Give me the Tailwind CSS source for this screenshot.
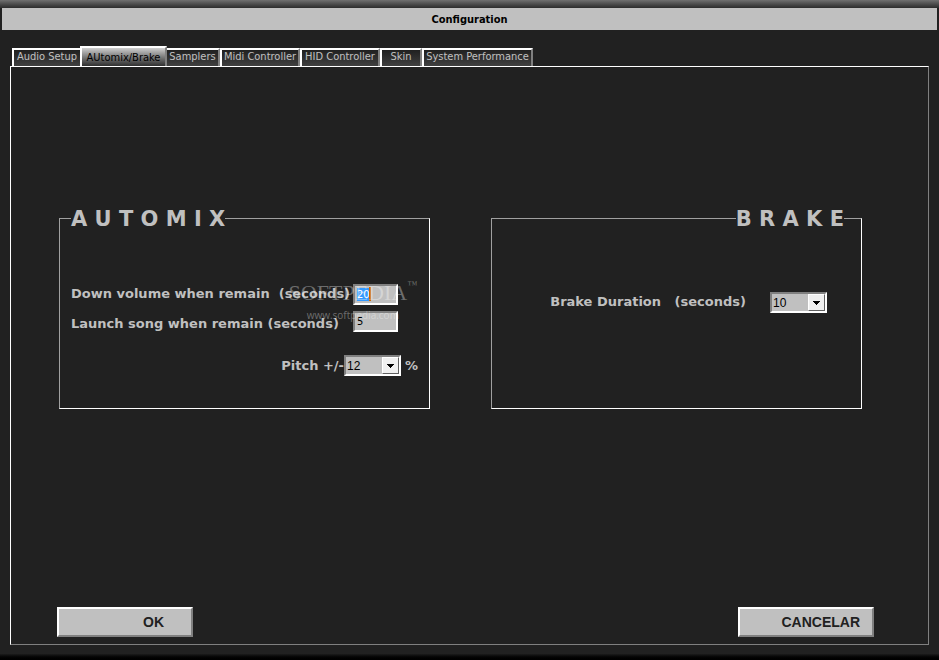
<!DOCTYPE html>
<html lang="en">
<head>
    <meta charset="UTF-8">
    <meta name="viewport" content="width=device-width, initial-scale=1.0">
    <title>Configuration</title>
    <script src="https://cdn.jsdelivr.net/npm/@tailwindcss/browser@4"></script>
</head>
<body class="min-h-screen flex flex-col bg-[#212121] font-['DejaVu_Sans_Condensed','DejaVu_Sans',sans-serif]">
    <!-- Title bar -->
    <div class="h-2 bg-linear-to-b from-[#707070] to-[#2c2c2c]"></div>
    <header class="mx-[2px] h-[22px] pt-[2px] bg-[#c0c0c0] flex items-center justify-center">
        <h1 class="text-[11px] leading-4 font-bold text-black">Configuration</h1>
    </header>

    <!-- Tabs -->
    <nav class="mt-4 px-3 h-5 flex items-end text-[11px] leading-[14px] whitespace-nowrap text-[#c0c0c0]">
        <button class="w-[68px] h-[18px] pb-[2px] border-2 border-r-0 border-b-0 border-white bg-linear-to-b from-[#202020] to-[#404040]">Audio Setup</button>
        <button class="w-[87px] h-5 pt-[2px] border-2 border-b-0 border-white border-r-[#808080] bg-linear-to-b from-[#d0d0d0] to-[#303030] text-black">AUtomix/Brake</button>
        <button class="w-[53px] h-[18px] pb-[2px] border-2 border-b-0 border-l-0 border-white border-r-[#808080] bg-linear-to-b from-[#202020] to-[#404040]">Samplers</button>
        <button class="w-[80px] h-[18px] pb-[2px] border-2 border-b-0 border-white border-r-[#808080] bg-linear-to-b from-[#202020] to-[#404040]">Midi Controller</button>
        <button class="w-[80px] h-[18px] pb-[2px] border-2 border-b-0 border-white border-r-[#808080] bg-linear-to-b from-[#202020] to-[#404040]">HID Controller</button>
        <button class="w-[42px] h-[18px] pb-[2px] border-2 border-b-0 border-white border-r-[#808080] bg-linear-to-b from-[#202020] to-[#404040]">Skin</button>
        <button class="w-[111px] h-[18px] pb-[2px] border-2 border-b-0 border-white border-r-[#808080] bg-linear-to-b from-[#202020] to-[#404040]">System Performance</button>
    </nav>

    <!-- Tab page -->
    <main class="flex-1 mx-[10px] flex flex-col justify-between border border-t-white border-l-white border-r-[#808080] border-b-[#808080] pb-[7px]">
        <div class="pt-[138px] pl-12 pr-[66px] grid grid-cols-2 gap-[61px] text-[13px] leading-5 font-bold font-['DejaVu_Sans',sans-serif] text-[#c0c0c0] whitespace-nowrap">
            <fieldset class="relative h-[204px] border border-t-[#a0a0a0] border-l-[#a0a0a0] border-r-white border-b-white">
                <legend class="ml-[11px] pt-[2px] text-[21px] leading-6 whitespace-pre">A U T O M I X</legend>
                <div class="pt-[53px] pl-[11px] grid grid-cols-[282px_45px] gap-y-[6px]">
                    <label for="downVolume" class="h-[21px] whitespace-pre">Down volume when remain  (seconds)</label>
                    <div class="relative">
                        <input id="downVolume" type="text" value="20" autofocus class="block w-full h-[21px] px-[2px] text-[11px] leading-[14px] font-normal font-['DejaVu_Sans_Condensed',sans-serif] text-black bg-[#c0c0c0] border-2 border-t-[#808080] border-l-[#808080] border-r-white border-b-white outline-none selection:bg-[#3399ff] selection:text-white">
                        <span class="absolute top-[3px] left-4 w-[2px] h-[14px] bg-[#cc6600]"></span>
                    </div>
                    <label for="launchSong" class="h-[21px] pt-[3px]">Launch song when remain (seconds)</label>
                    <input id="launchSong" type="text" value="5" class="h-[21px] px-[2px] text-[11px] leading-[14px] font-normal font-['DejaVu_Sans_Condensed',sans-serif] text-black bg-[#c0c0c0] border-2 border-t-[#808080] border-l-[#808080] border-r-white border-b-white outline-none">
                </div>
                <div class="mt-[23px] pr-[11px] flex justify-end items-center">
                    <label for="pitch">Pitch +/-</label>
                    <div class="relative w-[57px] mr-1">
                        <select id="pitch" class="block appearance-none w-full h-[21px] px-[1px] text-[12px] leading-4 font-normal font-['Liberation_Sans',sans-serif] text-black bg-[#c0c0c0] border-2 border-t-[#808080] border-l-[#808080] border-r-white border-b-white">
                            <option>12</option>
                        </select>
                        <span class="absolute top-[2px] right-[2px] w-[17px] h-[17px] flex items-center justify-center pointer-events-none bg-[#f0f0f0] border border-t-white border-l-white border-r-[#606060] border-b-[#606060]">
                            <svg width="7" height="4" viewBox="0 0 7 4" shape-rendering="crispEdges"><path d="M0 0h7v1h-1v1h-1v1h-1v1h-1v-1h-1v-1h-1v-1h-1z"/></svg>
                        </span>
                    </div>
                    <span>%</span>
                </div>
                <!-- Watermark -->
                <div class="absolute top-12 right-3 flex flex-col items-center pointer-events-none font-normal text-white/35">
                    <span class="flex items-start font-['Liberation_Serif',serif] text-[22px] leading-7">SOFTPEDIA<span class="text-[10px] leading-3">™</span></span>
                    <span class="font-['Open_Sans',sans-serif] text-[10px] leading-4">www.softpedia.com</span>
                </div>
            </fieldset>

            <fieldset class="h-[204px] border border-t-[#a0a0a0] border-l-[#a0a0a0] border-r-white border-b-white">
                <legend class="ml-auto mr-[17px] pt-[2px] text-[21px] leading-6 whitespace-pre">B R A K E</legend>
                <div class="pt-[61px] pr-[34px] flex justify-end">
                    <label for="brakeDuration" class="mr-6 whitespace-pre">Brake Duration   (seconds)</label>
                    <div class="relative w-[57px]">
                        <select id="brakeDuration" class="block appearance-none w-full h-[21px] px-[1px] text-[12px] leading-4 font-normal font-['Liberation_Sans',sans-serif] text-black bg-[#c0c0c0] border-2 border-t-[#808080] border-l-[#808080] border-r-white border-b-white">
                            <option>10</option>
                        </select>
                        <span class="absolute top-[2px] right-[2px] w-[17px] h-[17px] flex items-center justify-center pointer-events-none bg-[#f0f0f0] border border-t-white border-l-white border-r-[#606060] border-b-[#606060]">
                            <svg width="7" height="4" viewBox="0 0 7 4" shape-rendering="crispEdges"><path d="M0 0h7v1h-1v1h-1v1h-1v1h-1v-1h-1v-1h-1v-1h-1z"/></svg>
                        </span>
                    </div>
                </div>
            </fieldset>
        </div>

        <div class="pl-[46px] pr-[54px] flex justify-between text-[14px] leading-5 font-bold font-['Liberation_Sans',sans-serif] text-[#212121]">
            <button class="w-[136px] h-[30px] pr-[27px] text-right bg-[#c0c0c0] border-2 border-t-white border-l-white border-r-[#808080] border-b-[#808080]">OK</button>
            <button class="w-[136px] h-[30px] pr-3 text-right bg-[#c0c0c0] border-2 border-t-white border-l-white border-r-[#808080] border-b-[#808080]">CANCELAR</button>
        </div>
    </main>
    <div class="mt-[9px] h-[6px] bg-linear-to-b from-[#1c1c1c] to-black"></div>

    <script>
        document.getElementById('downVolume').focus();
        document.getElementById('downVolume').select();
    </script>
</body>
</html>
